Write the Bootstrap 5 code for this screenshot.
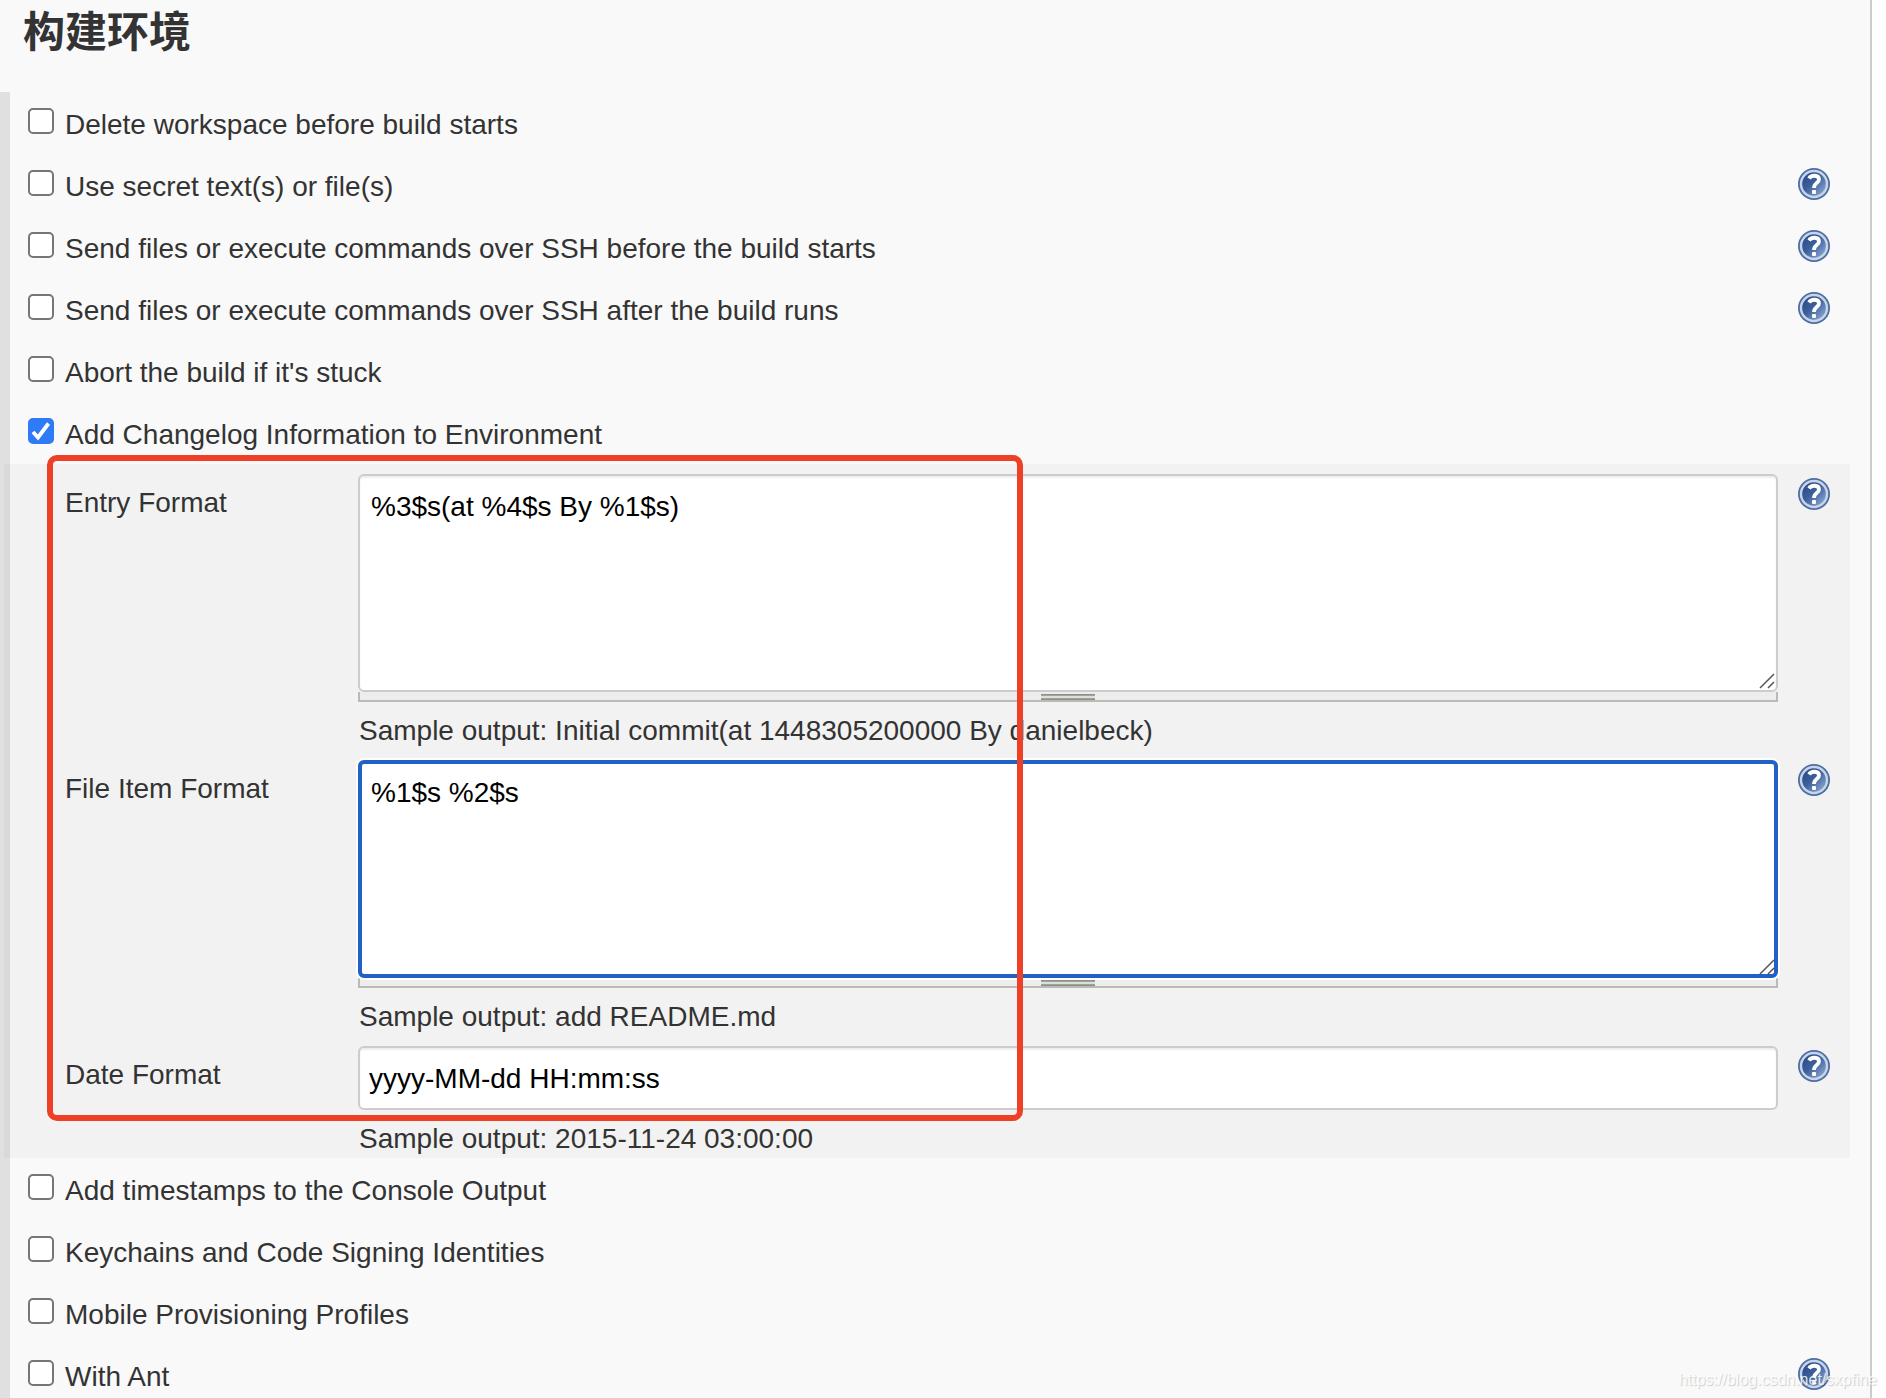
<!DOCTYPE html>
<html lang="zh-CN">
<head>
<meta charset="utf-8">
<meta name="viewport" content="width=device-width, initial-scale=1">
<title>构建环境</title>
<link href="https://cdn.jsdelivr.net/npm/bootstrap@5.3.0/dist/css/bootstrap.min.css" rel="stylesheet">
<style>
  body { font-family: "Liberation Sans", "Noto Sans CJK SC", sans-serif; font-size: 28px; line-height: 32px; color: #333; background: #fff; }
  .config-page { background: #f9f9f9; border-right: 2px solid #ccc; margin-right: 14px; }
  .section-title { font-family: "Noto Sans CJK SC", sans-serif; font-size: 42px; font-weight: 700; line-height: 58px; height: 92px; padding-left: 23px; margin: 0; }
  .section-body { border-left: 10px solid #e0e0e0; }
  .option-row { height: 62px; padding: 14px 40px 0 18px; }
  .option-row .form-check-input { width: 26px; height: 26px; margin: 2px 11px 0 0; border: 2px solid #767676; border-radius: 5px; background-color: #fff; flex: none; }
  .option-row .form-check-input:checked { border-color: #2f7bf6; background-color: #2f7bf6; background-size: 26px 26px; background-image: url("data:image/svg+xml,%3csvg xmlns='http://www.w3.org/2000/svg' viewBox='0 0 26 26'%3e%3cpath d='M5 14l5 5.500L20.500 5.500' fill='none' stroke='%23fff' stroke-width='3.800'/%3e%3c/svg%3e"); }
  .option-row label { padding-top: 3px; }
  .help-btn { width: 32px; height: 32px; padding: 0; border: 0; background: none; display: block; flex: none; }
  .help-btn svg { display: block; width: 32px; height: 32px; }
  .option-panel { background: rgba(0, 0, 0, .027); margin: 0 20px 0 -6px; }
  .field-row { padding: 10px 20px 0 61px; }
  .field-name { width: 293px; padding-top: 13px; flex: none; }
  .field-row .help-btn { margin: 4px 0 0 20px; }
  .field-row .form-control { font-size: 28px; line-height: 32px; color: #000; border: 2px solid #ccc; border-radius: 6px; box-shadow: inset 0 2px 2px rgba(0, 0, 0, .07); background: #fff; }
  .field-row textarea.form-control { display: block; height: 218px; padding: 15px 11px; resize: none; }
  .field-row input.form-control { height: 64px; padding: 13px 9px 11px; }
  .field-row .form-control.is-active { border: 4px solid #2160c4; padding: 13px 9px; box-shadow: 0 0 0 2px #fff; }
  .resize-corner { position: absolute; right: 3px; bottom: 3px; width: 16px; height: 16px; pointer-events: none; }
  .drag-bar { height: 10px; background: #ededed; border: solid #bbbbb6; border-width: 0 2px 2px; padding-top: 2px; }
  .drag-grip { width: 54px; height: 6px; margin: 0 auto; background: linear-gradient(#8b9086 0 1px, #a0a49c 1px 2px, #dcdfda 2px 4px, #a0a49c 4px 5px, #8b9086 5px); }
  .sample-text { height: 48px; padding-top: 13px; padding-left: 1px; }
  .callout-frame { position: absolute; left: 43px; top: -9px; bottom: 37px; width: 976px; border: 6px solid #ee4027; border-radius: 10px; pointer-events: none; }
  .page-mark { position: absolute; right: 9px; bottom: 8px; font-size: 16px; line-height: 20px; color: rgba(255, 255, 255, .85); text-shadow: 1px 1px 1px rgba(0, 0, 0, .18); }
</style>
<script src="https://cdn.jsdelivr.net/npm/bootstrap@5.3.0/dist/js/bootstrap.bundle.min.js"></script>
</head>
<body class="vh-100 overflow-hidden position-relative">
<svg class="position-absolute" width="0" height="0" aria-hidden="true">
  <defs>
    <linearGradient id="ball" x1="0" y1="0" x2="1" y2="1"><stop offset="0.1" stop-color="#284a86"/><stop offset="0.45" stop-color="#3c5f9c"/><stop offset="0.9" stop-color="#8ba8d3"/></linearGradient>
    <symbol id="help" viewBox="0 0 32 32">
      <circle cx="16" cy="16" r="16" fill="#4d6da5"/>
      <circle cx="16" cy="16" r="13" fill="url(#ball)" stroke="#c8d5e8" stroke-width="2.400"/>
      <path d="M11 10.500C13 6.800 21 6.500 21 11.500C21 15 16 15 16 20" fill="none" stroke="#fff" stroke-width="3.800"/>
      <rect x="14" y="22" width="4" height="4" rx="1" fill="#fff"/>
    </symbol>
    <symbol id="corner" viewBox="0 0 16 16"><path d="M1 15L15 1M9 15L15 9" stroke="#555" stroke-width="1.500" fill="none"/></symbol>
  </defs>
</svg>
<main class="config-page min-vh-100">
  <h1 class="section-title">构建环境</h1>
  <form class="section-body">
    <div class="option-row d-flex align-items-start"><input class="form-check-input" type="checkbox" id="o1"><label for="o1">Delete workspace before build starts</label></div>
    <div class="option-row d-flex align-items-start"><input class="form-check-input" type="checkbox" id="o2"><label for="o2">Use secret text(s) or file(s)</label><button type="button" class="help-btn ms-auto" aria-label="Help"><svg><use href="#help"/></svg></button></div>
    <div class="option-row d-flex align-items-start"><input class="form-check-input" type="checkbox" id="o3"><label for="o3">Send files or execute commands over SSH before the build starts</label><button type="button" class="help-btn ms-auto" aria-label="Help"><svg><use href="#help"/></svg></button></div>
    <div class="option-row d-flex align-items-start"><input class="form-check-input" type="checkbox" id="o4"><label for="o4">Send files or execute commands over SSH after the build runs</label><button type="button" class="help-btn ms-auto" aria-label="Help"><svg><use href="#help"/></svg></button></div>
    <div class="option-row d-flex align-items-start"><input class="form-check-input" type="checkbox" id="o5"><label for="o5">Abort the build if it's stuck</label></div>
    <div class="option-row d-flex align-items-start"><input class="form-check-input" type="checkbox" id="o6" checked><label for="o6">Add Changelog Information to Environment</label></div>

    <div class="option-panel position-relative">
      <div class="field-row d-flex align-items-start">
        <label class="field-name" for="entry">Entry Format</label>
        <div class="flex-grow-1">
          <div class="position-relative"><textarea class="form-control" id="entry">%3$s(at %4$s By %1$s)</textarea><svg class="resize-corner"><use href="#corner"/></svg></div>
          <div class="drag-bar"><div class="drag-grip"></div></div>
          <div class="sample-text">Sample output: Initial commit(at 1448305200000 By danielbeck)</div>
        </div>
        <button type="button" class="help-btn" aria-label="Help"><svg><use href="#help"/></svg></button>
      </div>
      <div class="field-row d-flex align-items-start">
        <label class="field-name" for="item">File Item Format</label>
        <div class="flex-grow-1">
          <div class="position-relative"><textarea class="form-control is-active" id="item">%1$s %2$s</textarea><svg class="resize-corner"><use href="#corner"/></svg></div>
          <div class="drag-bar"><div class="drag-grip"></div></div>
          <div class="sample-text">Sample output: add README.md</div>
        </div>
        <button type="button" class="help-btn" aria-label="Help"><svg><use href="#help"/></svg></button>
      </div>
      <div class="field-row d-flex align-items-start">
        <label class="field-name" for="date">Date Format</label>
        <div class="flex-grow-1">
          <input class="form-control" type="text" id="date" value="yyyy-MM-dd HH:mm:ss">
          <div class="sample-text">Sample output: 2015-11-24 03:00:00</div>
        </div>
        <button type="button" class="help-btn" aria-label="Help"><svg><use href="#help"/></svg></button>
      </div>
      <div class="callout-frame"></div>
    </div>

    <div class="option-row d-flex align-items-start"><input class="form-check-input" type="checkbox" id="o7"><label for="o7">Add timestamps to the Console Output</label></div>
    <div class="option-row d-flex align-items-start"><input class="form-check-input" type="checkbox" id="o8"><label for="o8">Keychains and Code Signing Identities</label></div>
    <div class="option-row d-flex align-items-start"><input class="form-check-input" type="checkbox" id="o9"><label for="o9">Mobile Provisioning Profiles</label></div>
    <div class="option-row d-flex align-items-start"><input class="form-check-input" type="checkbox" id="o10"><label for="o10">With Ant</label><button type="button" class="help-btn ms-auto" aria-label="Help"><svg><use href="#help"/></svg></button></div>
  </form>
</main>
<div class="page-mark">https://blog.csdn.net/sxpfine</div>
</body>
</html>
